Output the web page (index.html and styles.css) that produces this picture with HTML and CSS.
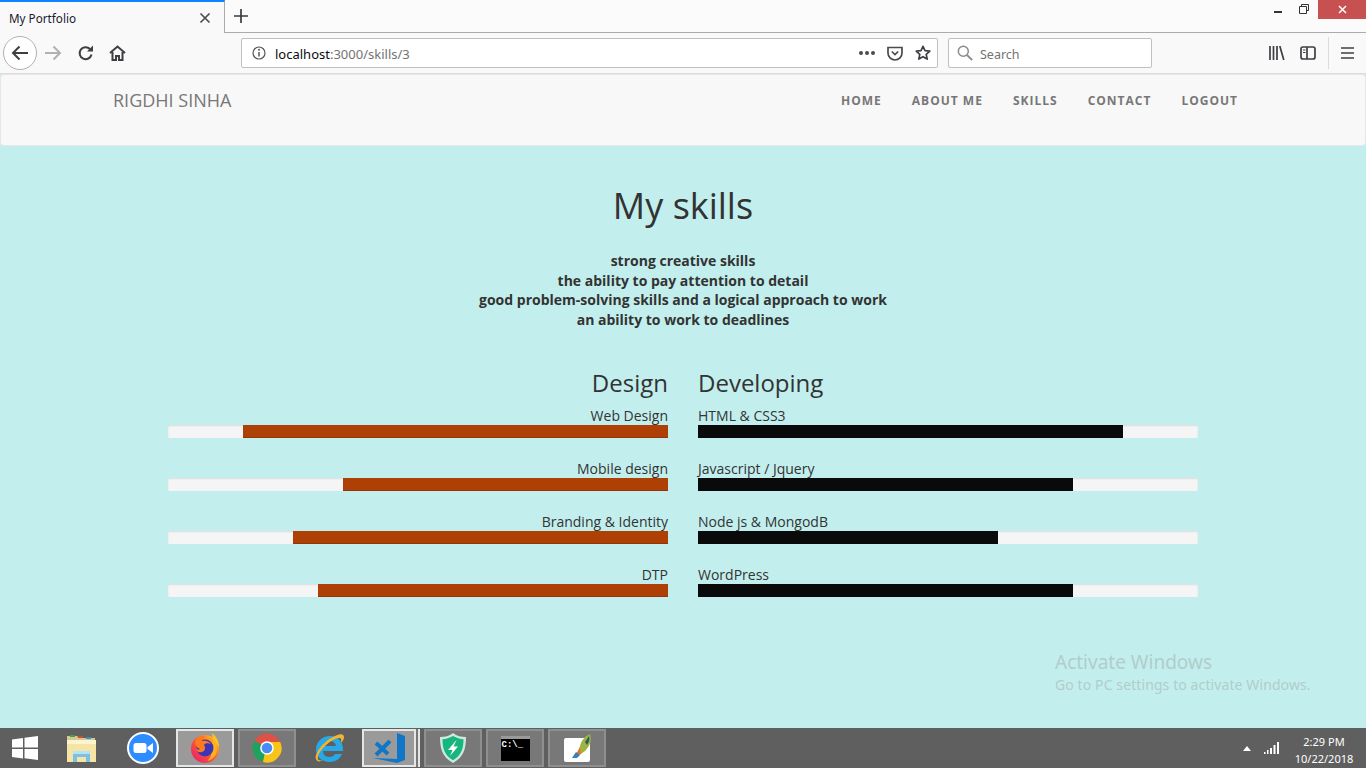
FILE: index.html
```html
<!DOCTYPE html>
<html lang="en">

<head>
    <meta charset="UTF-8">
    <meta name="viewport" content="width=device-width, initial-scale=1.0">
    <link rel="stylesheet" href="styles.css">
    <title>My Portfolio</title>
</head>

<body>
    <div class="tabstrip">
        <div class="tab">
            <span class="tab-title">My Portfolio</span>
            <svg class="tab-close" width="12" height="12" viewBox="0 0 12 12"><path d="M1.5 1.5l9 9M10.5 1.5l-9 9" stroke="#4a4a4f" stroke-width="1.6" fill="none"/></svg>
        </div>
        <div class="tab-new">
            <svg width="14" height="14" viewBox="0 0 14 14"><path d="M7 0v14M0 7h14" stroke="#3a3a3e" stroke-width="1.7"/></svg>
        </div>
        <div class="win-buttons">
            <svg class="win-min" width="8" height="2" viewBox="0 0 8 2"><rect width="8" height="2" fill="#333"/></svg>
            <svg class="win-max" width="10" height="10" viewBox="0 0 10 10"><path d="M2.5 2.5V.5h7v6H7.500M.5 2.5h7v7h-7z" fill="none" stroke="#333"/></svg>
            <div class="win-close">
                <svg width="9" height="9" viewBox="0 0 9 9"><path d="M1 1l7 7M8 1L1 8" stroke="#fff" stroke-width="1.5"/></svg>
            </div>
        </div>
    </div>

    <div class="toolbar">
        <div class="back-btn">
            <svg width="18" height="16" viewBox="0 0 18 16"><path d="M17 8H2M8.5 1.5L2 8l6.5 6.5" fill="none" stroke="#3f3f43" stroke-width="2"/></svg>
        </div>
        <svg class="tool-forward" width="17" height="16" viewBox="0 0 17 16"><path d="M0 8h15M8.5 1.5L15 8l-6.5 6.5" fill="none" stroke="#b1b1b3" stroke-width="2"/></svg>
        <svg class="tool-reload" width="16" height="16" viewBox="0 0 16 16"><path d="M13.5 9.5A6 6 0 1 1 12 4" fill="none" stroke="#3f3f43" stroke-width="2"/><path d="M15 .5v6H9z" fill="#3f3f43"/></svg>
        <svg class="tool-home" width="17" height="16" viewBox="0 0 17 16"><path d="M1 8l7.5-6.500L16 8M3.500 7v8H7v-4h3v4h3.500V7" fill="none" stroke="#3f3f43" stroke-width="2"/></svg>

        <div class="urlbar">
            <svg class="url-info" width="14" height="14" viewBox="0 0 14 14"><circle cx="7" cy="7" r="6" fill="none" stroke="#555" stroke-width="1.2"/><path d="M7 6v4.500" stroke="#555" stroke-width="1.5"/><circle cx="7" cy="3.800" r="1" fill="#555"/></svg>
            <span class="url-text">localhost<span class="url-dim">:3000/skills/3</span></span>
            <span class="url-dots"><i></i><i></i><i></i></span>
            <svg class="url-pocket" width="16" height="15" viewBox="0 0 16 15"><path d="M1 1.500h14V7A7 7 0 0 1 1 7z" fill="none" stroke="#4a4a4f" stroke-width="1.7"/><path d="M4.800 5.500L8 8.500l3.200-3" fill="none" stroke="#4a4a4f" stroke-width="1.7"/></svg>
            <svg class="url-star" width="16" height="16" viewBox="0 0 16 16"><path d="M8 1.300l2 4.400 4.800.5-3.600 3.200 1 4.700L8 11.700l-4.200 2.400 1-4.700L1.200 6.200 6 5.700z" fill="none" stroke="#3f3f43" stroke-width="1.7" stroke-linejoin="round"/></svg>
        </div>

        <div class="searchbar">
            <svg width="16" height="16" viewBox="0 0 16 16"><circle cx="6.300" cy="6.300" r="5" fill="none" stroke="#8a8a8a" stroke-width="1.5"/><path d="M10 10l5.200 5.200" stroke="#8a8a8a" stroke-width="1.8"/></svg>
            <span class="search-text">Search</span>
        </div>

        <div class="tool-right">
            <svg width="16" height="14" viewBox="0 0 16 14"><path d="M1 0v14M4.500 0v14M8 0v14M10.800 0l4 14" fill="none" stroke="#3f3f43" stroke-width="1.7"/></svg>
            <svg class="tool-sidebar" width="16" height="14" viewBox="0 0 16 14"><rect x="1" y="1" width="14" height="12" rx="2" fill="none" stroke="#3f3f43" stroke-width="1.7"/><path d="M7 1v12" stroke="#3f3f43" stroke-width="1.7"/><path d="M3 4h2.500M3 6.500h2.500" stroke="#3f3f43"/></svg>
            <span class="tool-sep"></span>
            <svg class="tool-menu" width="13" height="12" viewBox="0 0 13 12"><path d="M0 1h13M0 6h13M0 11h13" stroke="#3f3f43" stroke-width="1.7"/></svg>
        </div>
    </div>

    <div class="page">
        <nav class="navbar">
            <a class="brand" href="#">RIGDHI SINHA</a>
            <ul class="nav-links">
                <li><a href="#">Home</a></li>
                <li><a href="#">About me</a></li>
                <li><a href="#">Skills</a></li>
                <li><a href="#">Contact</a></li>
                <li><a href="#">Logout</a></li>
            </ul>
        </nav>

        <section class="skills">
            <h1>My skills</h1>
            <p class="intro">strong creative skills<br>the ability to pay attention to detail<br>good problem-solving skills and a logical approach to work<br>an ability to work to deadlines</p>

            <div class="columns">
                <div class="col col-design">
                    <h2>Design</h2>
                    <div class="skill">
                        <div class="skill-name">Web Design</div>
                        <div class="bar"><div class="fill" style="width: 85%"></div></div>
                    </div>
                    <div class="skill">
                        <div class="skill-name">Mobile design</div>
                        <div class="bar"><div class="fill" style="width: 65%"></div></div>
                    </div>
                    <div class="skill">
                        <div class="skill-name">Branding &amp; Identity</div>
                        <div class="bar"><div class="fill" style="width: 75%"></div></div>
                    </div>
                    <div class="skill">
                        <div class="skill-name">DTP</div>
                        <div class="bar"><div class="fill" style="width: 70%"></div></div>
                    </div>
                </div>

                <div class="col col-dev">
                    <h2>Developing</h2>
                    <div class="skill">
                        <div class="skill-name">HTML &amp; CSS3</div>
                        <div class="bar"><div class="fill" style="width: 85%"></div></div>
                    </div>
                    <div class="skill">
                        <div class="skill-name">Javascript / Jquery</div>
                        <div class="bar"><div class="fill" style="width: 75%"></div></div>
                    </div>
                    <div class="skill">
                        <div class="skill-name">Node js &amp; MongodB</div>
                        <div class="bar"><div class="fill" style="width: 60%"></div></div>
                    </div>
                    <div class="skill">
                        <div class="skill-name">WordPress</div>
                        <div class="bar"><div class="fill" style="width: 75%"></div></div>
                    </div>
                </div>
            </div>
        </section>

        <div class="watermark">
            <div class="wm-title">Activate Windows</div>
            <div class="wm-sub">Go to PC settings to activate Windows.</div>
        </div>
    </div>

    <div class="taskbar">
        <div class="task-icon task-start">
            <svg width="26" height="26" viewBox="0 0 26 26"><path d="M0 4.500L11 3v9.500H0zM12.500 2.800L26 1v11.500H12.500zM0 14h11v9.500L0 22zM12.500 14H26v11l-13.500-1.800z" fill="#fff"/></svg>
        </div>
        <div class="task-icon task-files">
            <svg width="32" height="30" viewBox="0 0 32 30"><path d="M2 3h10l2 2h16v6H2z" fill="#d6c98f"/><rect x="5" y="2" width="5" height="2" fill="#3fa34d"/><rect x="13" y="3" width="5" height="2" fill="#c94b3a"/><rect x="21" y="4" width="5" height="2" fill="#3a8fd0"/><rect x="2" y="7" width="29" height="22" fill="#f6e3a6"/><path d="M2 7h29v4H2z" fill="#fdf3cf"/><path d="M8 29v-9h17v9h-4v-5H12v5z" fill="#7cc0e4"/><rect x="8" y="18" width="17" height="3" fill="#b5e2f6"/></svg>
        </div>
        <div class="task-icon task-zoom">
            <svg width="32" height="32" viewBox="0 0 32 32"><circle cx="16" cy="16" r="15" fill="#2d8cff" stroke="#fff" stroke-width="2"/><rect x="6.500" y="11" width="13" height="10" rx="2.500" fill="#fff"/><path d="M20.500 15l5.500-4v10l-5.500-4z" fill="#fff"/></svg>
        </div>
        <div class="task-btn task-active">
            <svg width="32" height="32" viewBox="0 0 32 32">
                <defs>
                    <linearGradient id="fxRing" x1="0" y1="1" x2="1" y2="0">
                        <stop offset="0" stop-color="#e3127f"/>
                        <stop offset=".5" stop-color="#ff5a2b"/>
                        <stop offset="1" stop-color="#ffd21f"/>
                    </linearGradient>
                </defs>
                <circle cx="16" cy="17" r="14" fill="url(#fxRing)"/>
                <path d="M23 1c4 3 7 8 7 14L24 8z" fill="#ffc21a"/>
                <path d="M24 7c4 4 5 10 3 15-2 4-5 6-9 7 4-3 5-7 4-11z" fill="#ffb11f"/>
                <circle cx="16" cy="16" r="8.500" fill="#3d35b5"/>
                <path d="M6 10c2-5 7-7 11-6-3 1-4 3-4 5 3-1 7 0 9 3-3-1-6-1-7 1 2 3 1 6-2 7-3 1-6-1-6-4 1 2 3 2 4 1-3-1-5-4-5-7z" fill="#ff7a1f"/>
            </svg>
        </div>
        <div class="task-btn">
            <svg width="30" height="30" viewBox="0 0 30 30"><circle cx="15" cy="15" r="14.500" fill="#de5246"/><path d="M15 15L2.500 7.700A14.500 14.500 0 0 0 11 29z" fill="#1ca261"/><path d="M15 9h13.200A14.500 14.500 0 0 1 11 29z" fill="#f7c519"/><circle cx="15" cy="15" r="6.800" fill="#fff"/><circle cx="15" cy="15" r="5.300" fill="#4a8af4"/></svg>
        </div>
        <div class="task-icon task-ie">
            <svg width="32" height="32" viewBox="0 0 32 32"><path d="M24 19h6c.5-9-5-15-13-15C9 4 3 10 3 17.500 3 25 9 30 16.500 30c6 0 10.500-3 12.500-8h-7c-1 2-3 3-5.500 3C12 25 10 22 10 19zM10 14c.5-3 3-5 6.500-5s6 2 6.500 5z" fill="#29a8e8"/><path d="M3 27C1 24 8 10 22 4c6-3 9-2 9 1 0 2-1 4-3 6 .5-3 .5-5-2-5-3 0-9 3-15 9-4 4-7 9-6 12 0 1 2 2 5 1-3 2-6 2-7-1z" fill="#f2b632"/></svg>
        </div>
        <div class="task-btn task-active task-stacked">
            <svg width="32" height="32" viewBox="0 0 32 32"><path d="M24 1l8 3v24l-8 3L0 26l24 1z" fill="#0f76c8"/><path d="M3 11l12 11M3 23L17 9" fill="none" stroke="#0f76c8" stroke-width="4"/></svg>
        </div>
        <div class="task-btn">
            <svg width="30" height="32" viewBox="0 0 30 32"><path d="M15 1c4 3 8 4 13 4 0 11-2 20-13 26C4 25 2 16 2 5c5 0 9-1 13-4z" fill="#cfe8df"/><path d="M15 4c3.500 2 7 3 10.500 3.300 0 9-2 16-10.500 21C6.500 23.300 4.500 16.300 4.500 7.300 8 7 11.500 6 15 4z" fill="#16b67f"/><path d="M18.500 8L10 18h4.500L12 24l8-9.500h-4.500z" fill="#fff"/></svg>
        </div>
        <div class="task-btn">
            <div class="cmd-icon">
                <div class="cmd-top"></div>
                <span>C:\_</span>
            </div>
        </div>
        <div class="task-btn">
            <svg width="30" height="30" viewBox="0 0 30 30"><rect x="2" y="5" width="26" height="24" rx="2" fill="#fff"/><path d="M28 1c2 6 0 12-5 17l-7 5 2-10c1-5 5-10 10-12z" fill="#9fb53f"/><path d="M18 14l-5 9 6-2z" fill="#e9722c"/><path d="M10 25l4-6 4 3-3 3z" fill="#3d7fb5"/><path d="M27 3c1 3 0 6-2 9l-2-3z" fill="#2c5b6e"/></svg>
        </div>
        <div class="tray">
            <svg class="tray-up" width="8" height="5" viewBox="0 0 8 5"><path d="M4 0l4 5H0z" fill="#fff"/></svg>
            <svg class="tray-net" width="16" height="12" viewBox="0 0 16 12"><path d="M1 10h1.500v2H1zM4 8h1.500v4H4zM7 6h2v6H7zM10.500 3h2v9h-2zM14 0h2v12h-2z" fill="#fff"/></svg>
            <div class="clock">
                <div>2:29 PM</div>
                <div>10/22/2018</div>
            </div>
        </div>
    </div>
</body>

</html>
```

FILE: styles.css
```css
* {
    margin: 0;
    padding: 0;
    box-sizing: border-box;
}

html,
body {
    height: 768px;
    overflow: hidden;
}

body {
    display: flex;
    flex-direction: column;
    font-family: "Open Sans", "Noto Sans", sans-serif;
    background: #c2efed;
}

/*--------browser chrome-------*/

.tabstrip {
    height: 33px;
    display: flex;
    background: #fbfbfb;
    border-bottom: 1px solid #ababab;
    flex-shrink: 0;
}

.tab {
    width: 225px;
    height: 33px;
    display: flex;
    align-items: center;
    justify-content: space-between;
    padding: 1px 13px 0 9px;
    background: #f9f9fa;
    border-top: 2px solid #0a84ff;
    border-right: 1px solid #ababab;
    font-size: 11.7px;
    color: #1a1a2e;
    font-family: "Noto Sans", sans-serif;
}

.tab-new {
    width: 32px;
    display: flex;
    align-items: center;
    justify-content: center;
}

.win-buttons {
    margin-left: auto;
    display: flex;
    align-items: flex-start;
    height: 19px;
}

.win-min {
    margin: 11px 17px 0 0;
}

.win-max {
    margin: 4px 9px 0 0;
}

.win-close {
    width: 48px;
    height: 19px;
    background: #c75050;
    display: flex;
    align-items: center;
    justify-content: center;
}

.toolbar {
    height: 41px;
    display: flex;
    align-items: center;
    background: #f9f9fa;
    border-bottom: 1px solid #dcdcdc;
    flex-shrink: 0;
    font-family: "Noto Sans", sans-serif;
}

.back-btn {
    width: 34px;
    height: 34px;
    margin-left: 3px;
    border: 1px solid #b1b1b3;
    border-radius: 50%;
    background: #fff;
    display: flex;
    align-items: center;
    justify-content: center;
}

.tool-forward {
    margin-left: 8px;
}

.tool-reload {
    margin-left: 16px;
}

.tool-home {
    margin-left: 15px;
}

.urlbar {
    width: 697px;
    height: 30px;
    margin-left: 115px;
    display: flex;
    align-items: center;
    background: #fff;
    border: 1px solid #c0c0c0;
    border-radius: 2px;
    padding: 0 6px 0 10px;
    font-size: 13px;
}

.url-text {
    margin-left: 9px;
    padding-top: 1px;
    color: #0c0c0d;
}

.url-dim {
    color: #737373;
}

.url-dots {
    margin-left: auto;
    display: flex;
    gap: 2px;
}

.url-dots i {
    width: 4px;
    height: 4px;
    border-radius: 50%;
    background: #4a4a4f;
}

.url-pocket {
    margin-left: 12px;
}

.url-star {
    margin-left: 12px;
}

.searchbar {
    width: 204px;
    height: 30px;
    margin-left: 10px;
    display: flex;
    align-items: center;
    gap: 7px;
    background: #fff;
    border: 1px solid #c0c0c0;
    border-radius: 2px;
    padding-left: 8px;
    font-size: 12.5px;
    color: #737373;
}

.search-text {
    padding-top: 2px;
}

.tool-right {
    display: flex;
    align-items: center;
    margin-left: 117px;
}

.tool-sidebar {
    margin-left: 15px;
}

.tool-sep {
    width: 1px;
    height: 32px;
    background: #dcdcdc;
    margin-left: 12px;
}

.tool-menu {
    margin-left: 12px;
}

/*--------page-------*/

.page {
    flex: 1;
    position: relative;
    background: #c2efed;
    color: #333;
}

.navbar {
    height: 72px;
    display: flex;
    justify-content: space-between;
    align-items: flex-start;
    padding: 0 112px;
    background: #f8f8f8;
    border: 1px solid #e7e7e7;
    border-radius: 4px;
}

.brand {
    font-size: 18px;
    line-height: 50px;
    text-decoration: none;
    color: #777;
}

.nav-links {
    display: flex;
    list-style-type: none;
    gap: 30px;
    margin-right: 15px;
}

.nav-links a {
    font-size: 12px;
    font-weight: 700;
    letter-spacing: 1px;
    line-height: 52px;
    text-transform: uppercase;
    text-decoration: none;
    color: #777;
}

.skills {
    text-align: center;
}

h1 {
    font-size: 36px;
    font-weight: 400;
    line-height: 40px;
    margin-top: 40px;
}

.intro {
    font-size: 14px;
    font-weight: 700;
    line-height: 19.6px;
    margin-top: 25.3px;
}

.columns {
    display: flex;
    justify-content: center;
    gap: 30px;
    margin-top: 40.7px;
}

.col {
    width: 500px;
}

.col-design {
    text-align: right;
}

.col-dev {
    text-align: left;
}

h2 {
    font-size: 24px;
    font-weight: 400;
    line-height: 26px;
    margin-bottom: 10px;
}

.skill {
    margin-bottom: 21px;
}

.skill-name {
    font-size: 14px;
    line-height: 20px;
    height: 18px;
    margin-bottom: 1px;
}

.bar {
    height: 13px;
    display: flex;
    background: #f5f5f5;
    border-radius: 1px;
    box-shadow: inset 0 1px 2px rgba(0, 0, 0, .1);
}

.col-design .bar {
    justify-content: flex-end;
}

.fill {
    box-shadow: inset 0 -1px 0 rgba(0, 0, 0, .15);
}

.col-design .fill {
    background: #ae3f05;
}

.col-dev .fill {
    background: #0a0a0a;
}

.watermark {
    position: absolute;
    left: 1055px;
    top: 575px;
    color: #b2cccb;
    font-family: "Noto Sans", sans-serif;
}

.wm-title {
    font-size: 19px;
    line-height: 26px;
}

.wm-sub {
    font-size: 14px;
    line-height: 20px;
    letter-spacing: .1px;
}

/*--------taskbar-------*/

.taskbar {
    height: 40px;
    display: flex;
    align-items: center;
    background: #5f5f5f;
    flex-shrink: 0;
    font-family: "Noto Sans", sans-serif;
}

.task-icon {
    display: flex;
    align-items: center;
    justify-content: center;
}

.task-start {
    width: 26px;
    margin-left: 12px;
}

.task-files {
    width: 32px;
    margin-left: 27px;
}

.task-zoom {
    width: 32px;
    margin-left: 30px;
}

.task-btn {
    width: 58px;
    height: 38px;
    margin-left: 4px;
    display: flex;
    align-items: center;
    justify-content: center;
    background: #787878;
    border: 2px solid #8f8f8f;
}

.task-active {
    background: #9a9a9a;
    border-color: #e6e6e6;
}

.task-zoom + .task-btn {
    margin-left: 17px;
}

.task-ie {
    width: 32px;
    margin-left: 17px;
}

.task-stacked {
    width: 54px;
    margin-left: 17px;
    margin-right: 4px;
    box-shadow: 2px 0 0 #787878, 4px 0 0 #e6e6e6;
}

.cmd-icon {
    width: 29px;
    height: 25px;
    background: #000;
    color: #fff;
    font-family: "Liberation Mono", monospace;
    font-size: 9px;
    line-height: 12px;
    font-weight: 700;
    padding-left: 1px;
}

.cmd-top {
    height: 3px;
    margin-left: -1px;
    background: #9a9a9a;
}

.tray {
    margin-left: auto;
    display: flex;
    align-items: center;
}

.tray-net {
    margin-left: 12px;
}

.clock {
    width: 72px;
    margin-left: 9px;
    margin-right: 6px;
    padding-top: 3px;
    text-align: center;
    color: #fff;
    font-size: 11px;
    line-height: 17px;
    white-space: nowrap;
}
```
